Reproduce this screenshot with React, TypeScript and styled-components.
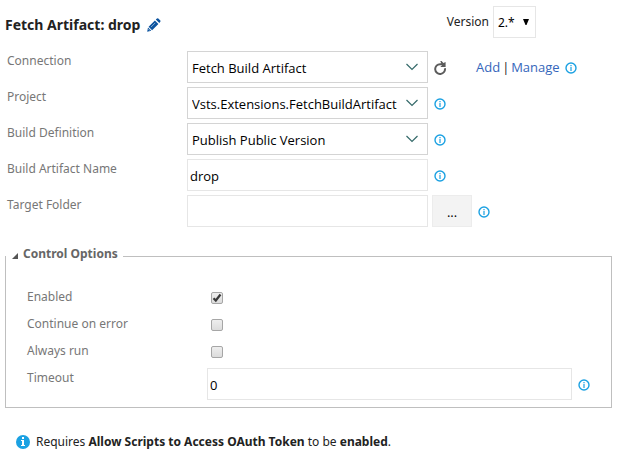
import React, { useState } from "react";
import styled, { createGlobalStyle } from "styled-components";

const GlobalStyle = createGlobalStyle`
  * { box-sizing: border-box; }
  body {
    margin: 0;
    background: #fff;
    color: #222;
    font: 13px/18px "Segoe UI", "Open Sans", "Noto Sans", sans-serif;
  }
  button, input, select { font: inherit; color: #000; border-radius: 0; margin: 0; }
`;

const textFont = `
  font-family: "Segoe UI", "Noto Sans", sans-serif;
  font-size: 12px;
  line-height: 20px;
`;

const Page = styled.main`
  padding: 6px 5px;
`;

const Header = styled.header`
  display: flex;
  height: 32px;
  justify-content: space-between;
  padding-right: 76px;
`;

const Title = styled.h1`
  display: flex;
  align-items: center;
  gap: 7px;
  margin: 0;
  padding-top: 5px;
  font-family: "Segoe UI", "Noto Sans", sans-serif;
  font-size: 14px;
  line-height: 20px;
  font-weight: 700;
  white-space: nowrap;
`;

const IconButton = styled.button`
  display: inline-flex;
  padding: 0;
  border: 0;
  background: none;
  cursor: pointer;
`;

const VersionLabel = styled.label`
  display: flex;
  align-items: center;
  gap: 4px;
  ${textFont}
`;

const Fields = styled.div`
  display: grid;
  gap: 4px;
  margin-top: 13px;
`;

const Row = styled.div`
  display: grid;
  grid-template-columns: 180px minmax(0, 241px) auto;
  padding-left: 2px;
  min-height: 32px;
`;

const Label = styled.label`
  color: #777;
  ${textFont}
`;

const Picker = styled.span<{ $arrow: number; $light?: boolean }>`
  display: grid;
  height: 32px;
  border: 1px solid ${(p) => (p.$light ? "#e6e6e6" : "#d4d4d4")};

  > select, > svg { grid-area: 1 / 1; }

  > svg {
    justify-self: end;
    margin: ${(p) => p.$arrow}px ${(p) => (p.$light ? 6 : 8)}px 0 0;
    pointer-events: none;
  }
`;

const Select = styled.select<{ $room: number }>`
  appearance: none;
  min-width: 0;
  width: 100%;
  padding: 2px ${(p) => p.$room}px 0 4px;
  border: 0;
  background: transparent;
`;

const TextInput = styled.input`
  min-width: 0;
  width: 100%;
  height: 32px;
  padding: 2px 2px 0;
  border: 1px solid #e6e6e6;
`;

const Extras = styled.div`
  display: flex;
  align-items: center;
  padding: 2px 0 0 6px;
`;

const BrowseExtras = styled.div`
  display: flex;
  align-items: center;
  gap: 6px;
  padding-left: 4px;

  > svg { margin-top: 2px; }
`;

const BrowseButton = styled.button`
  width: 40px;
  height: 32px;
  padding: 2px 0 0;
  border: 1px solid #ececec;
  background: #f3f3f3;
`;

const Links = styled.span`
  display: flex;
  gap: 2px;
  margin: -2px 5px 0 29px;
`;

const Divider = styled.span`
  width: 7px;
  text-align: center;
`;

const Link = styled.a`
  color: #3566bb;
  text-decoration: none;
`;

const Group = styled.fieldset`
  min-width: 0;
  margin: 17px 0 0;
  padding: 0 4px 7px 0;
  border: 1px solid #bfbfbf;
`;

const Legend = styled.legend`
  padding: 0 5px 4px 6px;
`;

const Toggle = styled.button`
  display: flex;
  align-items: center;
  gap: 5px;
  padding: 0;
  border: 0;
  background: none;
  color: #666;
  ${textFont}
  font-weight: 700;
`;

const Options = styled.div`
  padding: 19px 11px 0 21px;
`;

const OptionRow = styled.div`
  display: grid;
  grid-template-columns: 180px minmax(0, 1fr);
  height: 27px;
`;

const TimeoutRow = styled(OptionRow)`
  grid-template-columns: 180px minmax(0, 1fr) 24px;
  height: 32px;
`;

const TimeoutInfo = styled.span`
  display: flex;
  align-items: center;
  justify-content: center;
  padding-top: 2px;
`;

const CheckWrap = styled.span`
  display: grid;
  width: 12px;
  height: 12px;
  margin: 5px 4px;

  > * { grid-area: 1 / 1; }
  > svg { visibility: hidden; pointer-events: none; }
  > input:checked + svg { visibility: visible; }
`;

const CheckInput = styled.input`
  appearance: none;
  width: 12px;
  height: 12px;
  border: 1px solid #a6a6a6;
  border-radius: 2px;
  background: linear-gradient(#eee, #dcdcdc);
`;

const Notice = styled.p`
  display: flex;
  align-items: center;
  gap: 6px;
  margin: 24px 0 0 11px;
  ${textFont}
`;

const PencilIcon = () => (
  <svg width="14" height="14" viewBox="0 0 14 14" fill="#0b539f" aria-hidden="true">
    <path d="M1.6 8.7 7.9 2.4 11.4 5.9 5.1 12.2ZM8.8 1.5 10 .4Q10.7-.1 11.3.4L13.3 2.4Q13.8 3.1 13.3 3.8L12.3 5ZM1 9.5 4.3 12.8.2 13.8Z" />
    <path d="M4 9.1 8.2 4.9M1.4 11.2 2.8 12.6" stroke="#fff" strokeWidth=".5" />
  </svg>
);

const Chevron = () => (
  <svg width="14" height="8" viewBox="0 0 14 8" fill="none" stroke="#356a6a" strokeWidth="1.2" aria-hidden="true">
    <path d="M1.5 1 7 6.5 12.5 1" />
  </svg>
);

const DownTriangle = () => (
  <svg width="6" height="6" viewBox="0 0 6 6" aria-hidden="true">
    <path d="M0 0H6L3.5 6H2.5Z" />
  </svg>
);

const RefreshIcon = () => (
  <svg width="13" height="14" viewBox="0 0 13 14" aria-hidden="true">
    <path d="M10.9 7.2A4.9 4.9 0 1 1 6.2 3.2H8" fill="none" stroke="#5c5c5c" strokeWidth="2" />
    <path d="M6.3 0H7.6L9.4 2 11.6 1V6H6.3L8 4.2 7.4 3Z" fill="#5c5c5c" />
  </svg>
);

const InfoIcon = () => (
  <svg width="12" height="12" viewBox="0 0 12 12" role="img" aria-label="Information">
    <circle cx="6" cy="6" r="5" fill="none" stroke="#1ba1e2" strokeWidth="1.4" />
    <path d="M5.4 3H6.6V4.2H5.4ZM5.4 5H6.6V9H5.4Z" fill="#1ba1e2" />
  </svg>
);

const SolidInfoIcon = () => (
  <svg width="14" height="14" viewBox="0 0 14 14" aria-hidden="true">
    <circle cx="7" cy="7" r="7" fill="#1ba1e2" />
    <path d="M6 2H8V4H6ZM5 5H8V10H9V11H5V10H6V6H5Z" fill="#fff" />
  </svg>
);

const CheckMark = () => (
  <svg width="12" height="12" viewBox="0 0 12 12" fill="none" stroke="#3a3a3a" strokeWidth="2.2" aria-hidden="true">
    <path d="M2.5 6.2 4.8 8.5 9.5 2.5" />
  </svg>
);

const CornerTriangle = () => (
  <svg width="6" height="6" viewBox="0 0 6 6" fill="#555" aria-hidden="true">
    <path d="M6 0V6H0Z" />
  </svg>
);

const TriangleSlot = styled.span`
  display: flex;
  padding-top: 4px;
`;

function SelectField({ id, label, value, children }: { id: string; label: string; value: string; children: React.ReactNode }) {
  return (
    <Row>
      <Label htmlFor={id}>{label}</Label>
      <Picker $arrow={11}>
        <Select id={id} $room={24} defaultValue={value}>
          <option>{value}</option>
        </Select>
        <Chevron />
      </Picker>
      <Extras>{children}</Extras>
    </Row>
  );
}

function CheckField({ id, label, checked }: { id: string; label: string; checked?: boolean }) {
  return (
    <OptionRow>
      <Label htmlFor={id}>{label}</Label>
      <CheckWrap>
        <CheckInput id={id} type="checkbox" defaultChecked={checked} />
        <CheckMark />
      </CheckWrap>
    </OptionRow>
  );
}

export default function App() {
  const [open, setOpen] = useState(true);
  return (
    <>
      <GlobalStyle />
      <Page>
        <Header>
          <Title>
            Fetch Artifact: drop
            <IconButton aria-label="Edit name"><PencilIcon /></IconButton>
          </Title>
          <VersionLabel>
            Version
            <Picker $arrow={12} $light>
              <Select $room={20} defaultValue="2.*">
                <option>2.*</option>
              </Select>
              <DownTriangle />
            </Picker>
          </VersionLabel>
        </Header>
        <Fields>
          <SelectField id="connection" label="Connection" value="Fetch Build Artifact">
            <IconButton aria-label="Refresh"><RefreshIcon /></IconButton>
            <Links>
              <Link href="#add">Add</Link>
              <Divider>|</Divider>
              <Link href="#manage">Manage</Link>
            </Links>
            <InfoIcon />
          </SelectField>
          <SelectField id="project" label="Project" value="Vsts.Extensions.FetchBuildArtifact">
            <InfoIcon />
          </SelectField>
          <SelectField id="definition" label="Build Definition" value="Publish Public Version">
            <InfoIcon />
          </SelectField>
          <Row>
            <Label htmlFor="artifact">Build Artifact Name</Label>
            <TextInput id="artifact" defaultValue="drop" />
            <Extras><InfoIcon /></Extras>
          </Row>
          <Row>
            <Label htmlFor="folder">Target Folder</Label>
            <TextInput id="folder" />
            <BrowseExtras>
              <BrowseButton aria-label="Browse">...</BrowseButton>
              <InfoIcon />
            </BrowseExtras>
          </Row>
        </Fields>
        <Group>
          <Legend>
            <Toggle aria-expanded={open} onClick={() => setOpen(!open)}>
              <TriangleSlot><CornerTriangle /></TriangleSlot>
              Control Options
            </Toggle>
          </Legend>
          {open && (
            <Options>
              <CheckField id="enabled" label="Enabled" checked />
              <CheckField id="continue" label="Continue on error" />
              <CheckField id="always" label="Always run" />
              <TimeoutRow>
                <Label htmlFor="timeout">Timeout</Label>
                <TextInput id="timeout" defaultValue="0" />
                <TimeoutInfo><InfoIcon /></TimeoutInfo>
              </TimeoutRow>
            </Options>
          )}
        </Group>
        <Notice>
          <SolidInfoIcon />
          <span>
            Requires <b>Allow Scripts to Access OAuth Token</b> to be <b>enabled</b>.
          </span>
        </Notice>
      </Page>
    </>
  );
}
